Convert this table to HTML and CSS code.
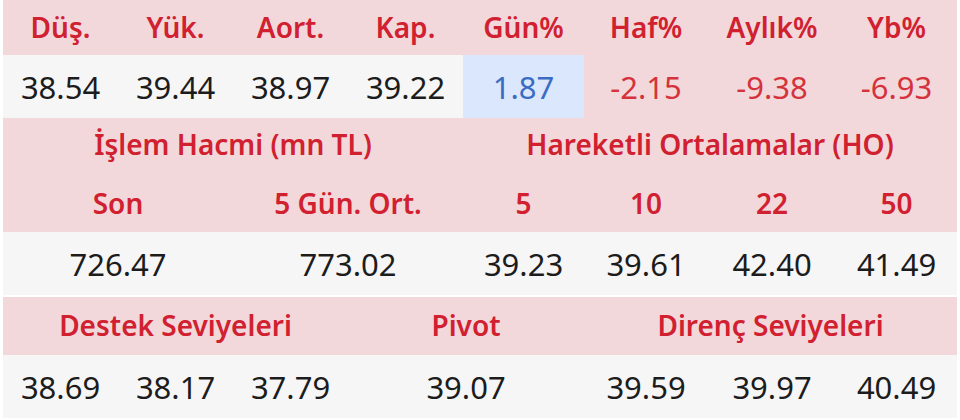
FILE: index.html
```html
<!DOCTYPE html>
<html lang="tr">
<head>
<meta charset="utf-8">
<link rel="stylesheet" href="styles.css">
</head>
<body>
<div class="board">
  <div class="grid sec1">
    <div class="h">Düş.</div>
    <div class="h">Yük.</div>
    <div class="h">Aort.</div>
    <div class="h">Kap.</div>
    <div class="h">Gün%</div>
    <div class="h">Haf%</div>
    <div class="h">Aylık%</div>
    <div class="h">Yb%</div>
    <div class="v">38.54</div>
    <div class="v">39.44</div>
    <div class="v">38.97</div>
    <div class="v">39.22</div>
    <div class="v up">1.87</div>
    <div class="v dn">-2.15</div>
    <div class="v dn">-9.38</div>
    <div class="v dn">-6.93</div>
  </div>
  <div class="grid sec2">
    <div class="h s4 title">İşlem Hacmi (mn TL)</div>
    <div class="h s4 title">Hareketli Ortalamalar (HO)</div>
    <div class="h s2 sub">Son</div>
    <div class="h s2 sub">5 Gün. Ort.</div>
    <div class="h sub">5</div>
    <div class="h sub">10</div>
    <div class="h sub">22</div>
    <div class="h sub">50</div>
    <div class="v s2">726.47</div>
    <div class="v s2">773.02</div>
    <div class="v">39.23</div>
    <div class="v">39.61</div>
    <div class="v">42.40</div>
    <div class="v">41.49</div>
  </div>
  <div class="grid sec3">
    <div class="h s3">Destek Seviyeleri</div>
    <div class="h s2">Pivot</div>
    <div class="h s3">Direnç Seviyeleri</div>
    <div class="v">38.69</div>
    <div class="v">38.17</div>
    <div class="v">37.79</div>
    <div class="v s2">39.07</div>
    <div class="v">39.59</div>
    <div class="v">39.97</div>
    <div class="v">40.49</div>
  </div>
</div>
</body>
</html>
```

FILE: styles.css
```css
html, body {
  margin: 0;
  padding: 0;
  background: #ffffff;
}

body {
  font-family: "Noto Sans", "Open Sans", "DejaVu Sans", sans-serif;
}

.board {
  margin-left: 3px;
  width: 954px;
}

.grid {
  display: grid;
  grid-template-columns: 115px 115px 115px 115px 121px 124px 128px 121px;
}

.sec1 {
  grid-template-rows: 55px 63px;
}

.sec2 {
  grid-template-rows: 54px 60px 63px;
}

.sec3 {
  margin-top: 2px;
  grid-template-rows: 58px 63px;
}

.h,
.v {
  display: flex;
  align-items: center;
  justify-content: center;
  white-space: nowrap;
}

.h {
  background: #f2d8db;
  color: #d1202f;
  font-weight: 600;
  font-size: 28px;
  padding-bottom: 2px;
}

.v {
  background: #f6f6f6;
  color: #1c1c1c;
  font-size: 31px;
}

.v.up {
  background: #dbe7fc;
  color: #3a6cc4;
}

.v.dn {
  background: #f2d8db;
  color: #d5333c;
}

.sub {
  padding-top: 4px;
}

.s2 { grid-column: span 2; }
.s3 { grid-column: span 3; }
.s4 { grid-column: span 4; }
```
